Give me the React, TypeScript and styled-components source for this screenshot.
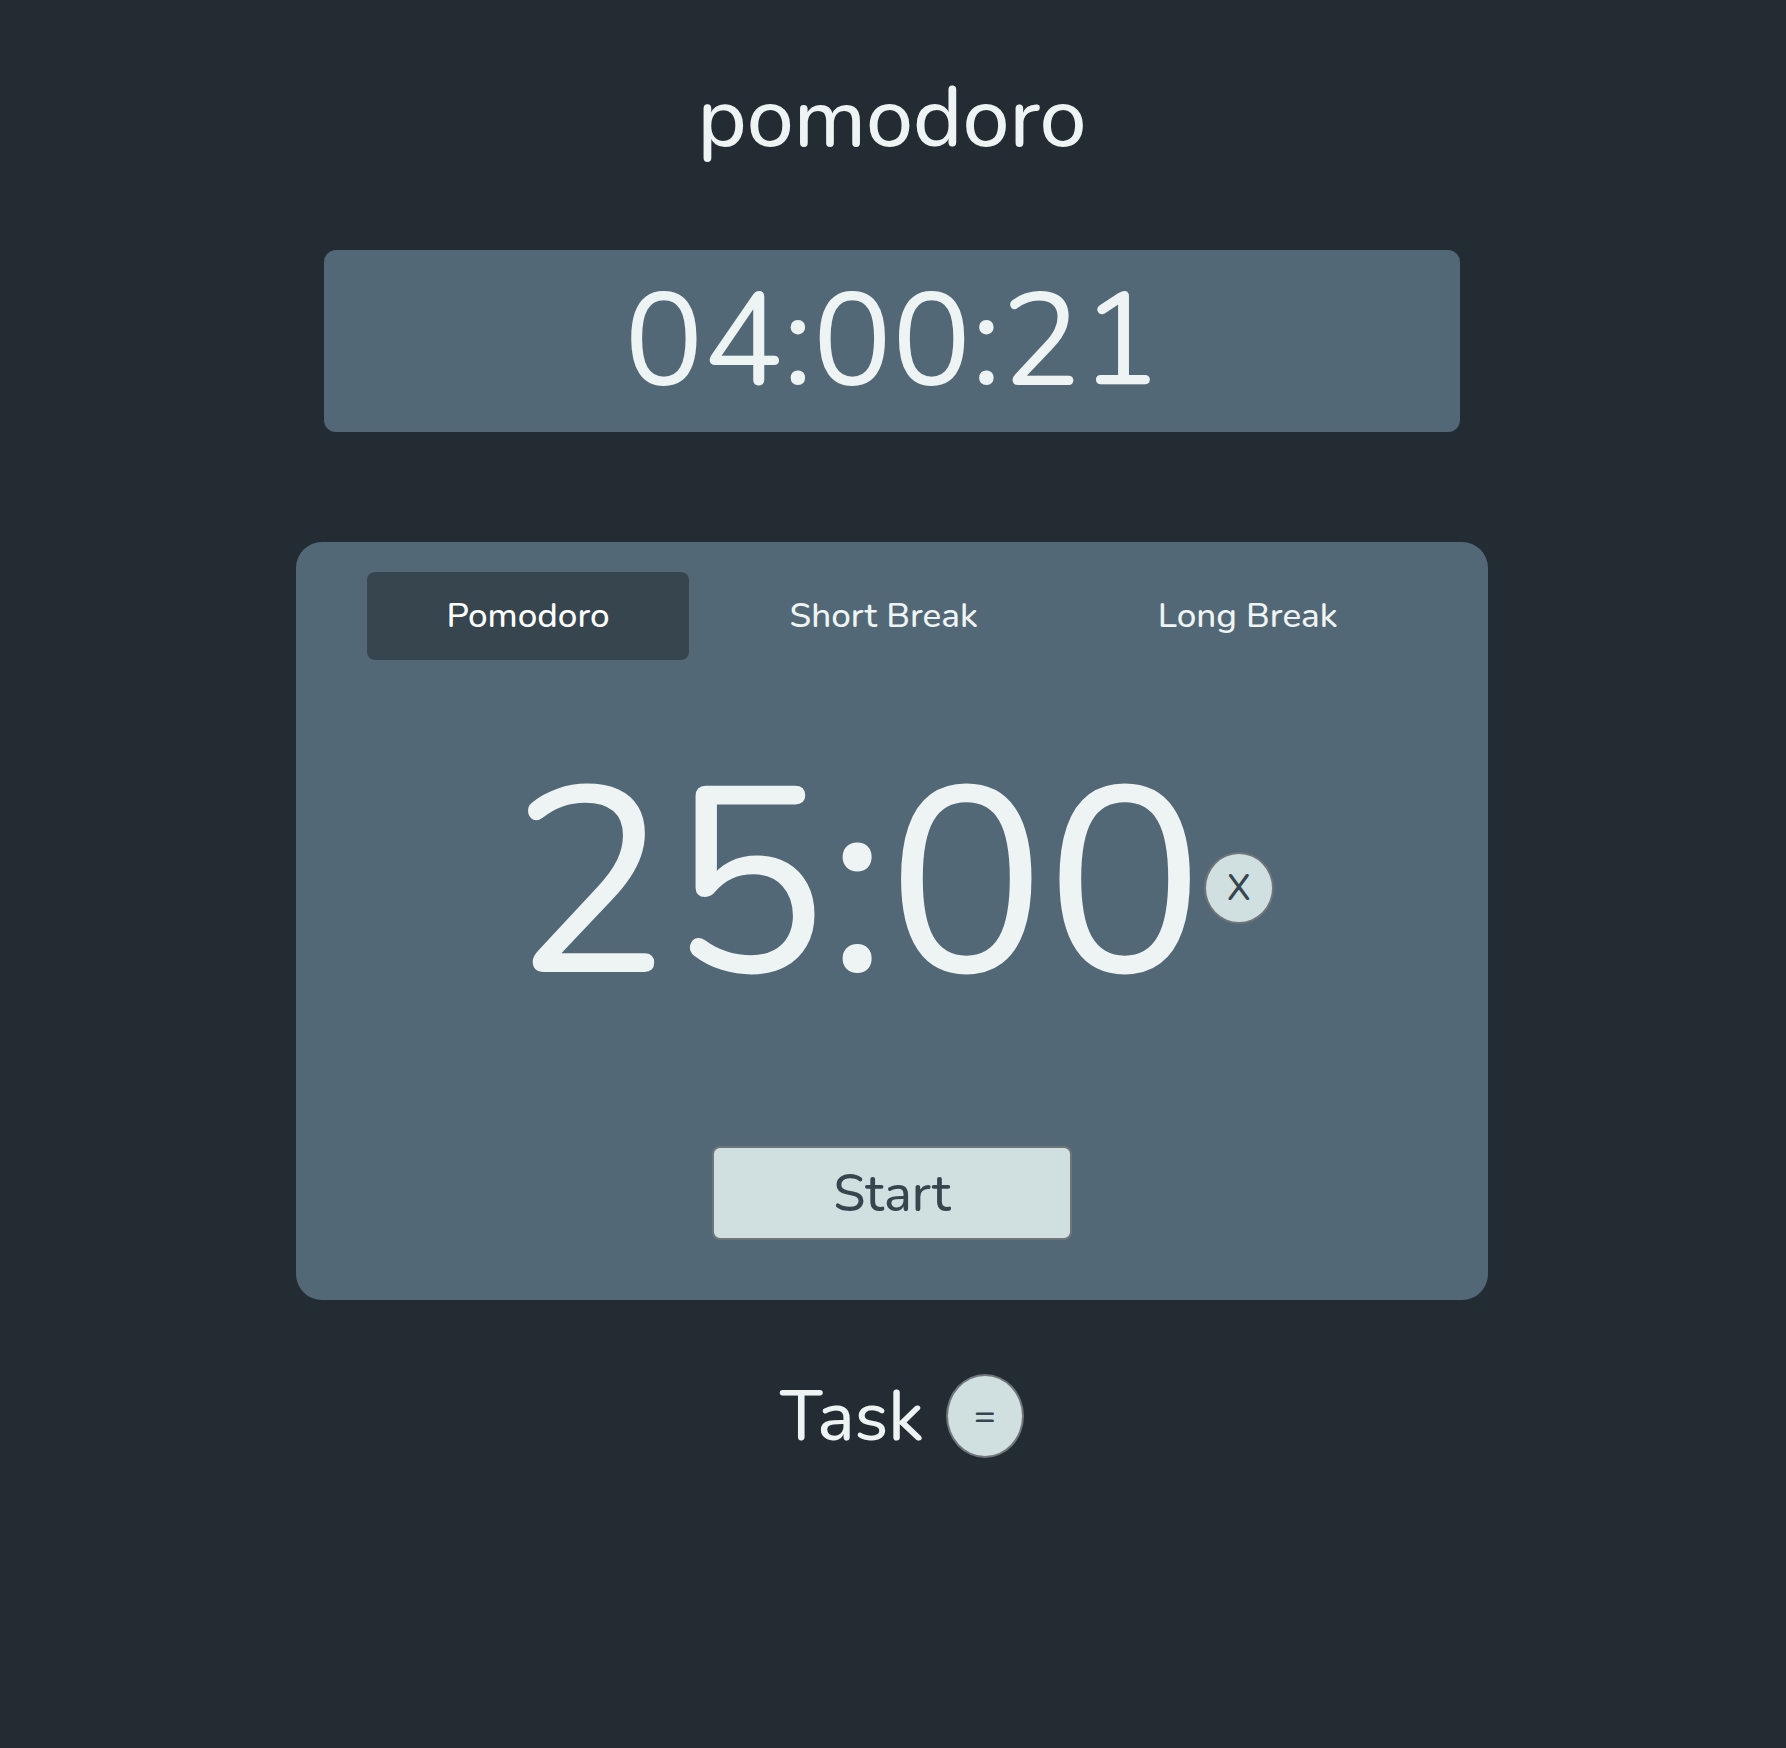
import { useState } from "react";
import styled, { createGlobalStyle } from "styled-components";

const colors = {
  page: "#242c33",
  panel: "#536876",
  tab: "#37454e",
  light: "#eef4f4",
  button: "#d0dfe0",
  border: "#6f757a",
};

const GlobalStyle = createGlobalStyle`
  *, *::before, *::after { box-sizing: border-box; }
  body {
    margin: 0;
    background: ${colors.page};
    color: ${colors.light};
    font-family: Nunito, Lato, sans-serif;
  }
  button { font-family: inherit; cursor: pointer; }
`;

const Page = styled.main`
  min-height: 100vh;
  display: flex;
  flex-direction: column;
  align-items: center;
  padding: 60px 26px 60px 24px;
`;

const Title = styled.h1`
  margin: 0 0 72px;
  font-size: 84px;
  font-weight: 500;
  line-height: 118px;
`;

const Clock = styled.section`
  width: 100%;
  max-width: 1136px;
  margin-bottom: 110px;
  border-radius: 12px;
  background: ${colors.panel};
  font-size: 132px;
  line-height: 182px;
  text-align: center;
`;

const Panel = styled.section`
  width: 100%;
  max-width: 1192px;
  display: flex;
  flex-direction: column;
  align-items: center;
  margin-bottom: 74px;
  padding: 30px 24px 60px;
  border-radius: 26px;
  background: ${colors.panel};
`;

const Tabs = styled.div`
  display: flex;
  justify-content: center;
  gap: 22px;
`;

const Tab = styled.button<{ $active: boolean }>`
  padding: 24px 79px;
  border: 0;
  border-radius: 8px;
  background: ${(p) => (p.$active ? colors.tab : "transparent")};
  color: ${(p) => (p.$active ? "#ffffff" : colors.light)};
  font-size: 35px;
  font-weight: 500;
  line-height: 40px;
  white-space: nowrap;
`;

const Countdown = styled.div`
  display: flex;
  align-items: center;
  margin: 45px 0 81px;
`;

const Time = styled.span`
  font-size: 264px;
  line-height: 360px;
`;

const ActionButton = styled.button`
  padding: 0;
  border: 2px solid ${colors.border};
  background: ${colors.button};
  color: ${colors.tab};
  font-weight: 500;
`;

const ResetButton = styled(ActionButton)`
  width: 70px;
  height: 72px;
  margin-top: 6px;
  border-radius: 50%;
  font-size: 36px;
`;

const StartButton = styled(ActionButton)`
  width: 360px;
  height: 94px;
  border-radius: 8px;
  font-size: 52px;
`;

const TaskBar = styled.div`
  display: flex;
  align-items: flex-start;
  gap: 22px;
  padding-left: 20px;
`;

const TaskHeading = styled.h2`
  margin: 0;
  font-size: 70px;
  font-weight: 500;
  line-height: 86px;
`;

const MenuButton = styled(ActionButton)`
  width: 78px;
  height: 84px;
  border-radius: 50%;
  font-size: 36px;
`;

const modes = [
  { label: "Pomodoro", time: "25:00" },
  { label: "Short Break", time: "05:00" },
  { label: "Long Break", time: "15:00" },
];

export default function App() {
  const [mode, setMode] = useState(0);

  return (
    <>
      <GlobalStyle />
      <Page>
        <Title>pomodoro</Title>
        <Clock>04:00:21</Clock>
        <Panel>
          <Tabs>
            {modes.map((m, i) => (
              <Tab key={m.label} type="button" $active={i === mode} onClick={() => setMode(i)}>
                {m.label}
              </Tab>
            ))}
          </Tabs>
          <Countdown>
            <Time>{modes[mode].time}</Time>
            <ResetButton type="button">X</ResetButton>
          </Countdown>
          <StartButton type="button">Start</StartButton>
        </Panel>
        <TaskBar>
          <TaskHeading>Task</TaskHeading>
          <MenuButton type="button">=</MenuButton>
        </TaskBar>
      </Page>
    </>
  );
}
